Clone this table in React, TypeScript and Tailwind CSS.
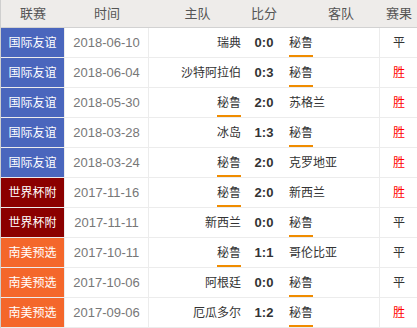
import React from "react";

type Match = {
  league: string;
  date: string;
  home: string;
  score: string;
  away: string;
  result: string;
};

const leagueBg: Record<string, string> = {
  国际友谊: "bg-[#4a66bd]",
  世界杯附: "bg-[#8b0000]",
  南美预选: "bg-[#f4672b]",
};

const matches: Match[] = [
  { league: "国际友谊", date: "2018-06-10", home: "瑞典", score: "0:0", away: "秘鲁", result: "平" },
  { league: "国际友谊", date: "2018-06-04", home: "沙特阿拉伯", score: "0:3", away: "秘鲁", result: "胜" },
  { league: "国际友谊", date: "2018-05-30", home: "秘鲁", score: "2:0", away: "苏格兰", result: "胜" },
  { league: "国际友谊", date: "2018-03-28", home: "冰岛", score: "1:3", away: "秘鲁", result: "胜" },
  { league: "国际友谊", date: "2018-03-24", home: "秘鲁", score: "2:0", away: "克罗地亚", result: "胜" },
  { league: "世界杯附", date: "2017-11-16", home: "秘鲁", score: "2:0", away: "新西兰", result: "胜" },
  { league: "世界杯附", date: "2017-11-11", home: "新西兰", score: "0:0", away: "秘鲁", result: "平" },
  { league: "南美预选", date: "2017-10-11", home: "秘鲁", score: "1:1", away: "哥伦比亚", result: "平" },
  { league: "南美预选", date: "2017-10-06", home: "阿根廷", score: "0:0", away: "秘鲁", result: "平" },
  { league: "南美预选", date: "2017-09-06", home: "厄瓜多尔", score: "1:2", away: "秘鲁", result: "胜" },
];

const cols = "grid grid-cols-[64px_84px_97px_36px_98px_38px]";

function Team({ name }: { name: string }) {
  if (name !== "秘鲁") return <span>{name}</span>;
  // the team we're following gets an orange underline at the row's bottom
  return (
    <span className="h-full flex items-center pt-[2px] border-b-2 border-[#f08c00]">{name}</span>
  );
}

export default function App() {
  return (
    <div
      className="w-[417px] h-[328px] bg-white border-l border-[#cfcfcf] overflow-hidden text-[12px] text-[#333]"
      style={{ fontFamily: '"Liberation Sans", "Noto Sans CJK SC", sans-serif' }}
    >
      <div className={`${cols} h-[28px] bg-[#eeecea] border-b border-[#d2d2d2] text-[13px] text-[#555]`}>
        <div className="flex items-center justify-center">联赛</div>
        <div className="flex items-center justify-center">时间</div>
        <div className="flex items-center justify-center">主队</div>
        <div className="flex items-center justify-center">比分</div>
        <div className="flex items-center justify-center pl-[20px]">客队</div>
        <div className="flex items-center justify-center">赛果</div>
      </div>
      {matches.map((m, i) => (
        <div key={i} className={`${cols} h-[30px] border-b border-[#ececec]`}>
          <div className={`${leagueBg[m.league]} text-white flex items-center justify-center border-r border-[#ececec]`}>
            {m.league}
          </div>
          <div className="flex items-center justify-center text-[#777] text-[13px] border-r border-[#ececec]">
            {m.date}
          </div>
          <div className="flex items-center justify-end pr-[5px]">
            <Team name={m.home} />
          </div>
          <div className="flex items-center justify-center font-bold text-[13px] text-[#333]">{m.score}</div>
          <div className="flex items-center justify-start pl-[7px] border-r border-[#ececec]">
            <Team name={m.away} />
          </div>
          <div className={`flex items-center justify-center ${m.result === "胜" ? "text-[#ff0000]" : "text-[#333]"}`}>
            {m.result}
          </div>
        </div>
      ))}
    </div>
  );
}
